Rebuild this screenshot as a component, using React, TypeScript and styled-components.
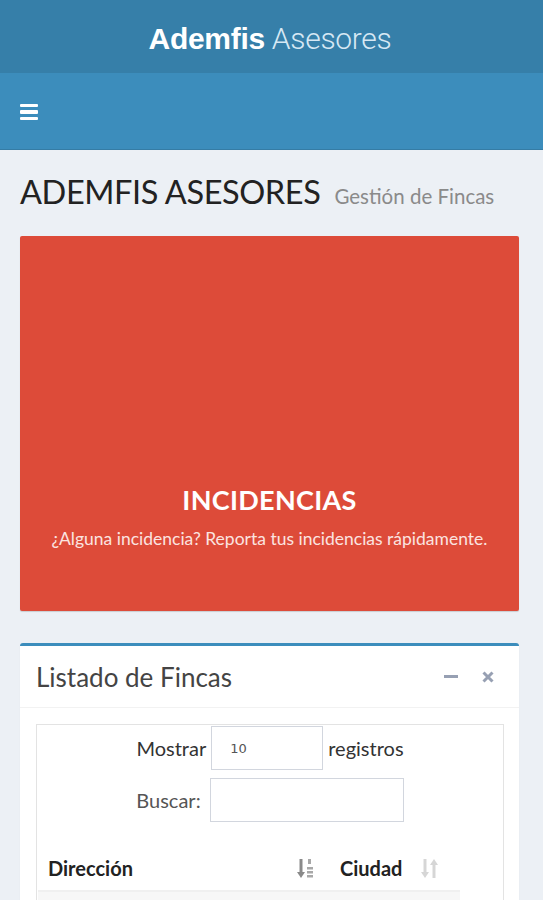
import React from "react";
import styled, { createGlobalStyle } from "styled-components";

const Global = createGlobalStyle`
  html, body { margin: 0; padding: 0; background: #ecf0f5; }
  body { font-family: "Lato", "Open Sans", sans-serif; color: #333; }
  * { box-sizing: border-box; }
`;

const Page = styled.div`
  width: 543px;
  min-height: 900px;
  background: #ecf0f5;
  overflow: hidden;
`;

const LogoBar = styled.header`
  height: 73px;
  background: #367fa9;
  display: flex;
  align-items: center;
  justify-content: center;
  font-family: "Liberation Sans", Arial, sans-serif;
  font-size: 30px;
  color: #fff;
  letter-spacing: -0.3px;
  padding-top: 4px;
  padding-right: 3px;
`;

const LogoStrong = styled.b`
  font-weight: 700;
  margin-right: 7px;
`;

const LogoLight = styled.span`
  font-family: "Roboto", "Liberation Sans", sans-serif;
  font-weight: 300;
  color: #d6e8f4;
`;

const NavBar = styled.nav`
  height: 77px;
  background: #3c8dbc;
  border-bottom: 1px solid #357ca5;
  display: flex;
  align-items: center;
  padding-left: 20px;
  padding-top: 2px;
`;

const Burger = styled.span`
  display: flex;
  flex-direction: column;
  gap: 3px;
  width: 18px;
`;

const BurgerBar = styled.span`
  height: 3.5px;
  background: #fff;
  border-radius: 1px;
`;

const Content = styled.main`
  padding: 21px 24px 0 20px;
`;

const TitleRow = styled.div`
  display: flex;
  align-items: baseline;
  gap: 14px;
  margin-bottom: 23px;
`;

const Title = styled.h1`
  margin: 0;
  font-family: "Lato", sans-serif;
  font-weight: 400;
  font-size: 32.5px;
  line-height: 42px;
  color: #222;
  letter-spacing: -0.4px;
`;

const Subtitle = styled.small`
  font-size: 20.5px;
  color: #8a8a8a;
  font-weight: 400;
`;

const AlertBox = styled.section`
  height: 375px;
  background: #dd4b39;
  border-radius: 2px;
  box-shadow: 0 1px 1px rgba(0, 0, 0, 0.15);
  color: #fff;
  display: flex;
  flex-direction: column;
  align-items: center;
  justify-content: flex-end;
  padding-bottom: 60px;
  text-align: center;
`;

const AlertTitle = styled.h3`
  margin: 0 0 10px;
  font-size: 27px;
  line-height: 34px;
  font-weight: 700;
  letter-spacing: 0.3px;
`;

const AlertText = styled.p`
  margin: 0;
  font-size: 17.5px;
  line-height: 24px;
  color: #fbe4e0;
`;

const Box = styled.section`
  margin-top: 32px;
  background: #fff;
  border-top: 3px solid #3c8dbc;
  border-radius: 3px;
  box-shadow: 0 1px 1px rgba(0, 0, 0, 0.1);
`;

const BoxHeader = styled.div`
  height: 62px;
  display: flex;
  align-items: center;
  justify-content: space-between;
  padding: 0 25px 0 16px;
  border-bottom: 1px solid #f2f2f2;
`;

const BoxTitle = styled.h3`
  margin: 0;
  font-size: 26px;
  font-weight: 400;
  color: #444;
`;

const Tools = styled.div`
  display: flex;
  align-items: center;
  gap: 24px;
`;

const BoxBody = styled.div`
  padding: 16px 15px 0 16px;
`;

const Wrapper = styled.div`
  border: 1px solid #e3e3e3;
  border-bottom: none;
  padding: 1px 0 0;
  height: 180px;
`;

const ControlRow = styled.div<{ $gap: number }>`
  display: flex;
  justify-content: center;
  align-items: center;
  gap: ${(p) => p.$gap}px;
  margin-bottom: 8px;
  font-size: 20px;
  color: #333;
`;

const Label = styled.span<{ $muted?: boolean }>`
  color: ${(p) => (p.$muted ? "#555" : "#333")};
`;

const Field = styled.div<{ $w: number }>`
  width: ${(p) => p.$w}px;
  height: 44px;
  border: 1px solid #d2d6de;
  background: #fff;
  display: flex;
  align-items: center;
  padding-left: 18px;
  font-family: "DejaVu Sans", sans-serif;
  font-size: 13px;
  color: #555;
`;

const Table = styled.div`
  margin: 24px 0 0 1px;
  width: 422px;
`;

const HeadRow = styled.div`
  display: grid;
  grid-template-columns: 292px 1fr;
  height: 46px;
  align-items: center;
  border-bottom: 2px solid #f0f0f0;
`;

const Th = styled.div<{ $pr: number }>`
  display: flex;
  align-items: center;
  justify-content: space-between;
  padding: 0 ${(p) => p.$pr}px 0 10px;
  font-weight: 700;
  font-size: 20px;
  color: #222;
`;

const StripeRow = styled.div`
  height: 40px;
  background: #f7f7f7;
`;

const AlphaSort = () => (
  <svg width="20" height="21" viewBox="0 0 20 21">
    <path d="M5 1v15" stroke="#8a8a8a" strokeWidth="3" />
    <path d="M1 14l4 6 4-6z" fill="#8a8a8a" />
    <rect x="12" y="1" width="3" height="5" fill="#a8a8a8" />
    <rect x="11" y="9" width="6" height="2.5" fill="#a8a8a8" />
    <rect x="11" y="13" width="6" height="2.5" fill="#a8a8a8" />
    <rect x="11" y="17" width="6" height="2.5" fill="#a8a8a8" />
  </svg>
);

const BothSort = () => (
  <svg width="20" height="21" viewBox="0 0 20 21">
    <path d="M5 1v15" stroke="#d6d6d6" strokeWidth="3" />
    <path d="M1 14l4 6 4-6z" fill="#d6d6d6" />
    <path d="M14 5v15" stroke="#d6d6d6" strokeWidth="3" />
    <path d="M10 7l4-6 4 6z" fill="#d6d6d6" />
  </svg>
);

const Minus = () => (
  <svg width="14" height="4" viewBox="0 0 14 4">
    <rect width="14" height="3" fill="#97a0b3" />
  </svg>
);

const Close = () => (
  <svg width="12" height="12" viewBox="0 0 12 12">
    <path d="M1.5 1.5l9 9M10.5 1.5l-9 9" stroke="#97a0b3" strokeWidth="3" />
  </svg>
);

export default function App() {
  return (
    <Page>
      <Global />
      <LogoBar>
        <LogoStrong>Ademfis</LogoStrong>
        <LogoLight>Asesores</LogoLight>
      </LogoBar>
      <NavBar>
        <Burger>
          <BurgerBar />
          <BurgerBar />
          <BurgerBar />
        </Burger>
      </NavBar>
      <Content>
        <TitleRow>
          <Title>ADEMFIS ASESORES</Title>
          <Subtitle>Gestión de Fincas</Subtitle>
        </TitleRow>
        <AlertBox>
          <AlertTitle>INCIDENCIAS</AlertTitle>
          <AlertText>¿Alguna incidencia? Reporta tus incidencias rápidamente.</AlertText>
        </AlertBox>
        <Box>
          <BoxHeader>
            <BoxTitle>Listado de Fincas</BoxTitle>
            <Tools>
              <Minus />
              <Close />
            </Tools>
          </BoxHeader>
          <BoxBody>
            <Wrapper>
              <ControlRow $gap={5}>
                <Label>Mostrar</Label>
                <Field $w={112}>10</Field>
                <Label>registros</Label>
              </ControlRow>
              <ControlRow $gap={9}>
                <Label $muted>Buscar:</Label>
                <Field $w={194} />
              </ControlRow>
              <Table>
                <HeadRow>
                  <Th $pr={14}>
                    Dirección
                    <AlphaSort />
                  </Th>
                  <Th $pr={20}>
                    Ciudad
                    <BothSort />
                  </Th>
                </HeadRow>
                <StripeRow />
              </Table>
            </Wrapper>
          </BoxBody>
        </Box>
      </Content>
    </Page>
  );
}
